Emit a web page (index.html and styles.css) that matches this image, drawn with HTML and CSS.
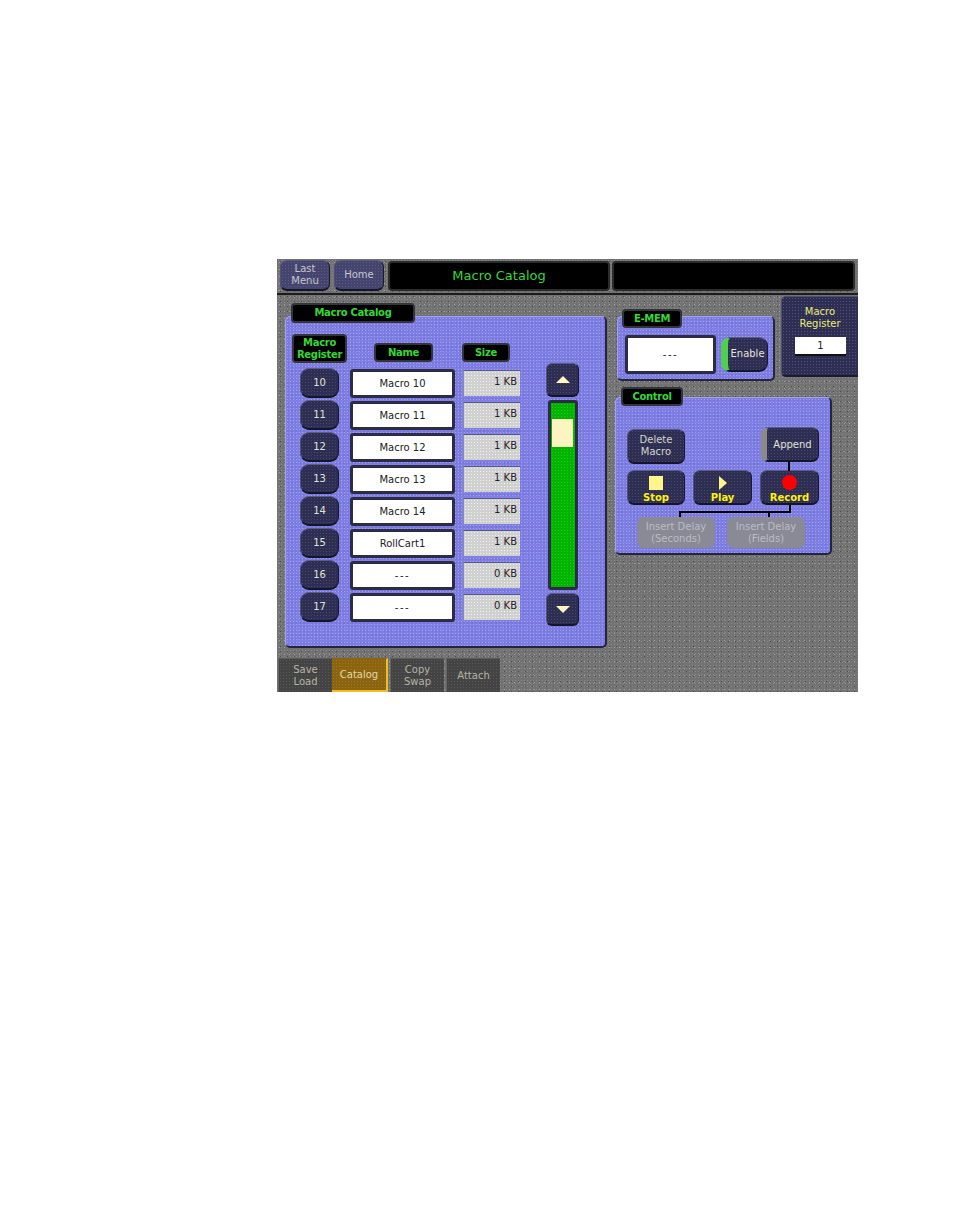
FILE: index.html
```html
<!DOCTYPE html>
<html lang="en">
<head>
  <meta charset="UTF-8">
  <title>Macro Catalog</title>
  <link rel="stylesheet" href="styles.css">
</head>
<body>
  <div class="screen">
    <div class="topbar">
      <div class="btn top-btn">Last<br>Menu</div>
      <div class="btn top-btn home-btn">Home</div>
      <div class="title-box">Macro Catalog</div>
      <div class="title-box title-empty"></div>
    </div>

    <div class="main">
      <div class="left">
        <div class="tag catalog-tag">Macro Catalog</div>
        <div class="panel catalog-panel">
          <div class="list">
            <div class="tag head-reg">Macro<br>Register</div>
            <div class="tag head-name">Name</div>
            <div class="tag head-size">Size</div>

            <div class="btn reg-btn">10</div><div class="field name-field">Macro 10</div><div class="size-field">1 KB</div>
            <div class="btn reg-btn">11</div><div class="field name-field">Macro 11</div><div class="size-field">1 KB</div>
            <div class="btn reg-btn">12</div><div class="field name-field">Macro 12</div><div class="size-field">1 KB</div>
            <div class="btn reg-btn">13</div><div class="field name-field">Macro 13</div><div class="size-field">1 KB</div>
            <div class="btn reg-btn">14</div><div class="field name-field">Macro 14</div><div class="size-field">1 KB</div>
            <div class="btn reg-btn">15</div><div class="field name-field">RollCart1</div><div class="size-field">1 KB</div>
            <div class="btn reg-btn">16</div><div class="field name-field dashes">---</div><div class="size-field">0 KB</div>
            <div class="btn reg-btn">17</div><div class="field name-field dashes">---</div><div class="size-field">0 KB</div>
          </div>
          <div class="scroll">
            <div class="btn scroll-btn"><svg width="14" height="7" viewBox="0 0 14 7"><path d="M7 0 L14 7 L0 7 Z" fill="#fff6c0"/></svg></div>
            <div class="track"><div class="thumb"></div></div>
            <div class="btn scroll-btn scroll-down"><svg width="14" height="7" viewBox="0 0 14 7"><path d="M0 0 L14 0 L7 7 Z" fill="#fff6c0"/></svg></div>
          </div>
        </div>
      </div>

      <div class="side">
        <div class="side-top">
          <div class="emem">
            <div class="tag emem-tag">E-MEM</div>
            <div class="panel emem-panel">
              <div class="field emem-field dashes">---</div>
              <div class="btn enable-btn">Enable</div>
            </div>
          </div>
          <div class="reg-box">
            <div class="reg-label">Macro<br>Register</div>
            <div class="reg-value">1</div>
          </div>
        </div>

        <div class="control">
          <div class="tag control-tag">Control</div>
          <div class="panel control-panel">
            <div class="control-row first-row">
              <div class="btn ctl-btn delete-btn">Delete<br>Macro</div>
              <div class="btn ctl-btn append-btn">Append</div>
            </div>
            <div class="control-row">
              <div class="btn ctl-btn action-btn stop-btn">
                <svg width="14" height="14" viewBox="0 0 14 14"><rect width="14" height="14" fill="#fff58a"/></svg>
                <span>Stop</span>
              </div>
              <div class="btn ctl-btn action-btn play-btn">
                <svg width="8" height="14" viewBox="0 0 8 14"><path d="M0 0 L8 7 L0 14 Z" fill="#fff58a"/></svg>
                <span>Play</span>
              </div>
              <div class="btn ctl-btn action-btn record-btn">
                <svg width="15" height="15" viewBox="0 0 15 15"><circle cx="7.5" cy="7.5" r="7.5" fill="#ff0000"/></svg>
                <span>Record</span>
              </div>
            </div>
            <svg class="bracket" width="112" height="12" viewBox="0 0 112 12">
              <path d="M1 12 V7 H111 V0 M90 7 V12" fill="none" stroke="#000" stroke-width="2"/>
            </svg>
            <div class="control-row delay-row">
              <div class="delay-btn">Insert Delay<br>(Seconds)</div>
              <div class="delay-btn">Insert Delay<br>(Fields)</div>
            </div>
          </div>
        </div>
      </div>
    </div>

    <div class="tabs">
      <div class="tab">Save<br>Load</div>
      <div class="tab tab-active">Catalog</div>
      <div class="tab tab-copy">Copy<br>Swap</div>
      <div class="tab tab-attach">Attach</div>
    </div>
  </div>
</body>
</html>
```

FILE: styles.css
```css
* {
  box-sizing: border-box;
}
body {
  margin: 0;
  padding: 259px 0 0 277px;
  background-color: #fff;
  font-family: "DejaVu Sans", sans-serif;
  font-size: 10px;
  line-height: 12px;
}
.screen {
  width: 581px;
  height: 433px;
  display: flex;
  flex-direction: column;
  overflow: hidden;
  background-color: #727272;
  background-image:
    radial-gradient(circle, #a0a0a0 0.6px, transparent 0.8px),
    radial-gradient(circle, #4c4c4c 0.6px, transparent 0.8px),
    radial-gradient(circle, #8a8a8a 0.6px, transparent 0.8px);
  background-size: 5px 7px, 7px 5px, 3px 3px;
}

/* top row */
.topbar {
  height: 36px;
  display: flex;
  align-items: flex-start;
  padding: 1px 0 0 3px;
  border-bottom: 2px solid #1c1c1c;
}
.btn {
  display: flex;
  align-items: center;
  justify-content: center;
  text-align: center;
  color: #e2e2d8;
  background-color: #2e2e52;
  background-image: radial-gradient(circle, #484870 0.6px, transparent 0.8px);
  background-size: 3px 3px;
  border: 1px solid #1a1a30;
  border-top-color: #5c5c82;
  border-left-color: #50507a;
  border-bottom: 2px solid #14142a;
  border-radius: 7px;
}
.top-btn {
  width: 50px;
  height: 31px;
  color: #c6c6cc;
  background-color: #44446e;
  background-image: radial-gradient(circle, #5c5c86 0.6px, transparent 0.8px);
}
.home-btn {
  margin-left: 4px;
}
.title-box {
  width: 222px;
  height: 30px;
  margin: 1px 0 0 4px;
  background: #000;
  border: 2px solid #2c2c2c;
  border-radius: 4px;
  color: #35d835;
  font-size: 13px;
  line-height: 26px;
  text-align: center;
}
.title-empty {
  width: 243px;
  margin-left: 2px;
}

/* middle */
.main {
  flex: 1;
  display: flex;
}
.left {
  width: 330px;
  padding: 8px 0 0 8px;
}
.panel {
  background-color: #8080e4;
  background-image:
    radial-gradient(circle, #a0a0f4 0.6px, transparent 0.8px),
    radial-gradient(circle, #6868cc 0.6px, transparent 0.8px);
  background-size: 3px 3px, 4px 4px;
  border: 1px solid #a0a0f0;
  border-right: 2px solid #24243c;
  border-bottom: 2px solid #24243c;
  border-radius: 5px;
}
.tag {
  position: relative;
  z-index: 1;
  display: flex;
  align-items: center;
  justify-content: center;
  text-align: center;
  background: #000;
  border: 2px solid #34343c;
  border-radius: 4px;
  color: #35d835;
  font-weight: bold;
  letter-spacing: -0.3px;
}
.catalog-tag {
  width: 124px;
  height: 20px;
  margin: 0 0 -7px 6px;
}
.catalog-panel {
  width: 322px;
  height: 332px;
  display: flex;
  align-items: flex-start;
  padding: 17px 0 0 6px;
}
.list {
  display: grid;
  grid-template-columns: 58px 113px 57px;
  grid-template-rows: 34px repeat(8, 32px);
  align-items: start;
}
.head-reg {
  width: 55px;
  height: 29px;
}
.head-name {
  width: 59px;
  height: 19px;
  margin: 9px 0 0 24px;
}
.head-size {
  width: 48px;
  height: 19px;
  margin: 9px 0 0 -1px;
}
.reg-btn {
  width: 39px;
  height: 30px;
  margin-left: 8px;
  border-radius: 9px;
}
.field {
  display: flex;
  align-items: center;
  justify-content: center;
  background-color: #fff;
  background-image: radial-gradient(circle, #e4e4e4 0.5px, transparent 0.7px);
  background-size: 6px 6px;
  border: 3px solid #2c2c44;
  border-radius: 3px;
  color: #222;
}
.dashes {
  letter-spacing: 1.5px;
}
.name-field {
  width: 105px;
  height: 29px;
  margin-top: 1px;
}
.size-field {
  width: 57px;
  height: 26px;
  margin-top: 2px;
  padding: 5px 3px 0 0;
  text-align: right;
  color: #222;
  background-color: #d0d0d0;
  background-image: radial-gradient(circle, #f2f2f2 0.6px, transparent 0.8px);
  background-size: 3px 3px;
  border-left: 1px solid #8a8ab0;
  border-top: 1px solid #5a5a90;
}
.scroll {
  width: 33px;
  margin: 29px 0 0 26px;
  display: flex;
  flex-direction: column;
  align-items: center;
}
.scroll-btn {
  width: 33px;
  height: 34px;
  border-radius: 6px;
}
.scroll-down {
  margin-top: 3px;
  height: 33px;
}
.track {
  width: 30px;
  height: 190px;
  margin-top: 3px;
  padding: 19px 0 0 0;
  background-color: #00b400;
  background-image: radial-gradient(circle, #20c820 0.6px, transparent 0.8px);
  background-size: 3px 3px;
  border: 3px solid #2c2c44;
  border-radius: 3px;
}
.thumb {
  width: 21px;
  height: 28px;
  margin: -3px auto 0;
  background: #fdf5bf;
}

/* right side */
.side {
  flex: 1;
}
.side-top {
  display: flex;
  align-items: flex-start;
  height: 86px;
}
.emem {
  width: 158px;
  margin: 14px 0 0 10px;
}
.emem-tag {
  width: 60px;
  height: 19px;
  margin: 0 0 -12px 5px;
}
.emem-panel {
  height: 65px;
  display: flex;
  align-items: flex-start;
  padding: 18px 0 0 7px;
}
.emem-field {
  width: 91px;
  height: 39px;
}
.enable-btn {
  width: 47px;
  height: 35px;
  margin: 2px 0 0 5px;
  border-left: 7px solid #4fd04f;
  border-radius: 9px;
}
.reg-box {
  width: 77px;
  height: 81px;
  margin: 1px 0 0 6px;
  padding-top: 9px;
  background-color: #2e2e52;
  background-image: radial-gradient(circle, #50507a 0.6px, transparent 0.8px);
  background-size: 3px 3px;
  border: 1px solid #50507a;
  border-bottom: 2px solid #1a1a30;
  border-right: 0;
  border-radius: 5px 0 0 5px;
  text-align: center;
}
.reg-label {
  color: #ecec70;
}
.reg-value {
  width: 51px;
  height: 19px;
  margin: 7px 0 0 13px;
  background: #fff;
  border-bottom: 2px solid #111;
  color: #222;
  line-height: 18px;
}
.control {
  width: 217px;
  margin: 6px 0 0 8px;
}
.control-tag {
  width: 62px;
  height: 19px;
  margin: 0 0 -9px 6px;
}
.control-panel {
  height: 158px;
  padding: 31px 0 0 11px;
}
.control-row {
  display: flex;
  align-items: flex-start;
  column-gap: 8px;
}
.first-row {
  height: 41px;
}
.ctl-btn {
  width: 58px;
  height: 35px;
}
.delete-btn {
  color: #d4d4c8;
}
.append-btn {
  position: relative;
  width: 58px;
  margin: -2px 0 0 68px;
  padding-top: 2px;
  border-left: 6px solid #8a8a8a;
}
.append-btn::after {
  content: "";
  position: absolute;
  left: 21px;
  top: 33px;
  width: 2px;
  height: 10px;
  background: #000;
}
.action-btn {
  flex-direction: column;
  padding-top: 4px;
  color: #fff100;
  font-weight: bold;
  line-height: 11px;
}
.action-btn svg {
  display: block;
  margin-bottom: 2px;
}
.play-btn {
  width: 59px;
}
.record-btn {
  width: 59px;
}
.bracket {
  display: block;
  margin-left: 52px;
}
.delay-row {
  padding-left: 10px;
  column-gap: 12px;
}
.delay-btn {
  width: 78px;
  height: 31px;
  padding-top: 4px;
  background: #8a8a96;
  border-radius: 6px;
  text-align: center;
  color: #bcbcc4;
}

/* bottom tabs */
.tabs {
  height: 34px;
  display: flex;
  padding-left: 1px;
}
.tab {
  width: 54px;
  display: flex;
  align-items: center;
  justify-content: center;
  text-align: center;
  color: #b4b4a4;
  background-color: #444;
  background-image: radial-gradient(circle, #585858 0.6px, transparent 0.8px);
  background-size: 3px 3px;
  border-top: 1px solid #5c5c5c;
  border-left: 1px solid #666;
}
.tab-active {
  width: 56px;
  background-color: #8a6410;
  background-image: radial-gradient(circle, #a07818 0.6px, transparent 0.8px);
  border-top: 1px solid #8a6410;
  border-left: 0;
  border-right: 2px solid #f0c020;
  border-bottom: 2px solid #f0c020;
  color: #e0d8a8;
}
.tab-copy {
  margin-left: 2px;
}
.tab-attach {
  margin-left: 2px;
}
```
